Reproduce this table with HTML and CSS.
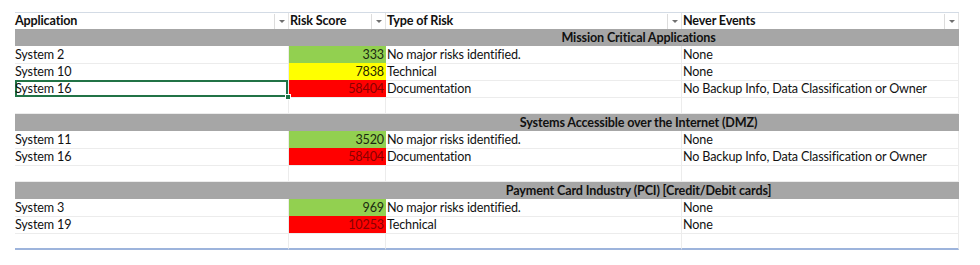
FILE: index.html
```html
<!DOCTYPE html>
<html>
<head>
<meta charset="utf-8">
<link rel="stylesheet" href="styles.css">
</head>
<body>
<div class="sheet">
  <div class="row head">
    <div class="hc"><span class="ht">Application</span><span class="dd"><i></i></span></div>
    <div class="hc"><span class="ht">Risk Score</span><span class="dd"><i></i></span></div>
    <div class="hc"><span class="ht">Type of Risk</span><span class="dd"><i></i></span></div>
    <div class="hc"><span class="ht">Never Events</span><span class="dd"><i></i></span></div>
  </div>

  <div class="section"><span>Mission Critical Applications</span></div>
  <div class="row"><div class="c">System 2</div><div class="c num green">333</div><div class="c">No major risks identified.</div><div class="c">None</div></div>
  <div class="row"><div class="c">System 10</div><div class="c num yellow">7838</div><div class="c">Technical</div><div class="c">None</div></div>
  <div class="row"><div class="c sel">System 16</div><div class="c num red">58404</div><div class="c">Documentation</div><div class="c">No Backup Info, Data Classification or Owner</div></div>
  <div class="row"><div class="c"></div><div class="c"></div><div class="c"></div><div class="c"></div></div>

  <div class="section"><span>Systems Accessible over the Internet (DMZ)</span></div>
  <div class="row"><div class="c">System 11</div><div class="c num green">3520</div><div class="c">No major risks identified.</div><div class="c">None</div></div>
  <div class="row"><div class="c">System 16</div><div class="c num red">58404</div><div class="c">Documentation</div><div class="c">No Backup Info, Data Classification or Owner</div></div>
  <div class="row"><div class="c"></div><div class="c"></div><div class="c"></div><div class="c"></div></div>

  <div class="section"><span>Payment Card Industry (PCI) [Credit/Debit cards]</span></div>
  <div class="row"><div class="c">System 3</div><div class="c num green">969</div><div class="c">No major risks identified.</div><div class="c">None</div></div>
  <div class="row"><div class="c">System 19</div><div class="c num red">10253</div><div class="c">Technical</div><div class="c">None</div></div>
  <div class="row last"><div class="c"></div><div class="c"></div><div class="c"></div><div class="c"></div></div>
</div>
</body>
</html>
```

FILE: styles.css
```css
html, body {
  margin: 0;
  background: #ffffff;
}
body {
  font-family: Lato, "Liberation Sans", sans-serif;
  font-size: 12.6px;
  letter-spacing: -0.15px;
  color: #111;
}
.sheet {
  margin: 12px 0 0 15px;
  width: 944px;
}
.row {
  display: grid;
  grid-template-columns: 274px 97px 296px 277px;
  height: 17px;
}
.head {
  border-top: 1px solid #d3dbe5;
  height: 16px;
  font-weight: bold;
}
.hc {
  display: flex;
  align-items: center;
  justify-content: space-between;
  border-right: 1px solid #e4e4e4;
  padding-left: 1px;
}
.hc:first-child { padding-left: 0; }
.ht {
  line-height: 16px;
}
.dd {
  width: 13px;
  height: 15px;
  border-left: 1px solid #dcdcdc;
  display: flex;
  align-items: center;
  justify-content: center;
}
.dd i {
  width: 0;
  height: 0;
  border-left: 3px solid transparent;
  border-right: 3px solid transparent;
  border-top: 3px solid #707070;
}
.section {
  height: 17px;
  background: #a6a6a6;
  font-weight: bold;
  display: flex;
  align-items: center;
  justify-content: center;
  padding-left: 303px;
}
.c {
  line-height: 17px;
  border-bottom: 1px solid #ececec;
  border-right: 1px solid #ececec;
  box-sizing: border-box;
  padding-left: 1px;
  white-space: nowrap;
  position: relative;
}
.row .c:first-child { padding-left: 0; }
.num {
  text-align: right;
  padding-right: 2px;
  border-right: none;
}
.green { background: #92d050; color: #1b2a10; }
.yellow { background: #ffff00; color: #262600; }
.red { background: #ff0000; color: #8a0000; }
.sel {
  box-shadow: inset 0 0 0 2px #217346;
  border-bottom-color: transparent;
}
.sel::after {
  content: "";
  position: absolute;
  right: -3px;
  bottom: -3px;
  width: 4px;
  height: 4px;
  background: #217346;
  border: 1px solid #fff;
  z-index: 2;
}
.last .c {
  border-bottom: 2px solid #9db4dc;
}
```
